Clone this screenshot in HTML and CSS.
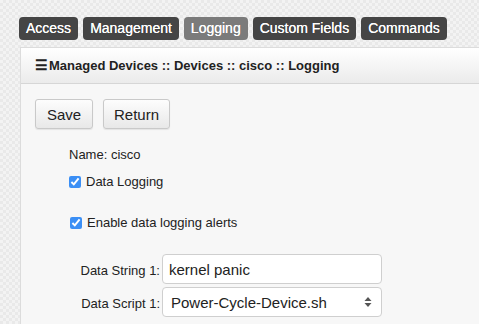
FILE: index.html
```html
<!DOCTYPE html>
<html lang="en">
<head>
  <meta charset="UTF-8">
  <title>Managed Devices - Logging</title>
  <link rel="stylesheet" href="styles.css">
</head>
<body>
  <nav class="tabs">
    <a class="tab">Access</a>
    <a class="tab">Management</a>
    <a class="tab active">Logging</a>
    <a class="tab">Custom Fields</a>
    <a class="tab">Commands</a>
  </nav>
  <div class="panel">
    <div class="panel-header">
      <span class="menu-icon">&#9776;</span>Managed Devices :: Devices :: cisco :: Logging
    </div>
    <div class="panel-body">
      <div class="actions">
        <button class="btn btn-save">Save</button>
        <button class="btn btn-return">Return</button>
      </div>
      <div class="details">
        <div class="name">Name: cisco</div>
        <label class="check"><input type="checkbox" checked> Data Logging</label>
        <label class="check alerts"><input type="checkbox" checked> Enable data logging alerts</label>
        <div class="fields">
          <label class="field-label">Data String 1:</label>
          <input class="field" type="text" value="kernel panic">
          <label class="field-label">Data Script 1:</label>
          <select class="field">
            <option>Power-Cycle-Device.sh</option>
          </select>
          <span></span>
          <input class="field next" type="text" value="">
        </div>
      </div>
    </div>
  </div>
</body>
</html>
```
FILE: styles.css
```css
body {
  margin: 0;
  padding: 17px 0 0 19px;
  font-family: "Liberation Sans", Arial, sans-serif;
  font-size: 13px;
  color: #222;
  background-color: #efefef;
  background-image: repeating-conic-gradient(#e9e9e9 0 25%, #f3f3f3 0 50%);
  background-size: 6px 6px;
  overflow: hidden;
}
.tabs {
  display: flex;
  gap: 5px;
  height: 23px;
}
.tab {
  display: block;
  padding: 0 7px;
  line-height: 23px;
  background: #454545;
  color: #fff;
  border-radius: 4px;
  font-size: 14px;
  text-shadow: 0 0 0.5px #fff;
}
.tab.active {
  background: #7b7b7b;
}
.panel {
  margin: 7px 0 0 1px;
  background: #f7f7f7;
  border: 1px solid #dcdcdc;
  border-right: none;
  height: 400px;
}
.panel-header {
  height: 35px;
  line-height: 35px;
  padding-left: 14px;
  background: linear-gradient(#ffffff, #ebebeb);
  border-bottom: 1px solid #d6d6d6;
  font-weight: bold;
  font-size: 13px;
  color: #222;
}
.menu-icon {
  font-size: 14px;
  margin-right: 1px;
}
.panel-body {
  padding: 15px 0 0 14px;
}
.actions {
  display: flex;
  gap: 10px;
}
.btn {
  height: 30px;
  padding: 0;
  font-family: inherit;
  font-size: 15px;
  color: #222;
  background: linear-gradient(#fdfdfd, #e8e8e8);
  border: 1px solid #c9c9c9;
  border-radius: 3px;
  box-shadow: 0 1px 1px rgba(0, 0, 0, 0.08);
}
.btn-save {
  width: 58px;
}
.btn-return {
  width: 67px;
}
.details {
  padding-left: 34px;
  margin-top: 17px;
}
.name {
  line-height: 18px;
}
.check {
  display: flex;
  align-items: center;
  margin-top: 9px;
  line-height: 18px;
}
.check input {
  width: 12px;
  height: 12px;
  margin: 0 5px 0 0;
  accent-color: #3b8ff5;
}
.alerts {
  margin-top: 23px;
  padding-left: 1px;
}
.fields {
  display: grid;
  grid-template-columns: 91px 220px;
  column-gap: 2px;
  row-gap: 3px;
  align-items: center;
  margin-top: 22px;
}
.field-label {
  text-align: right;
  font-size: 13px;
  padding-top: 2px;
}
.field {
  box-sizing: border-box;
  height: 30px;
  padding: 0 6px;
  font-family: inherit;
  font-size: 15px;
  color: #222;
  background: #fff;
  border: 1px solid #cfcfcf;
  border-radius: 4px;
}
select.field {
  appearance: none;
  padding-left: 8px;
  background: #fff url("data:image/svg+xml,%3Csvg xmlns='http://www.w3.org/2000/svg' width='8' height='12'%3E%3Cpath d='M4 1 L7.5 5 L0.5 5 Z M4 11 L7.5 7 L0.5 7 Z' fill='%23555'/%3E%3C/svg%3E") no-repeat right 9px center;
}
.field.next {
  margin-top: 4px;
}
```
